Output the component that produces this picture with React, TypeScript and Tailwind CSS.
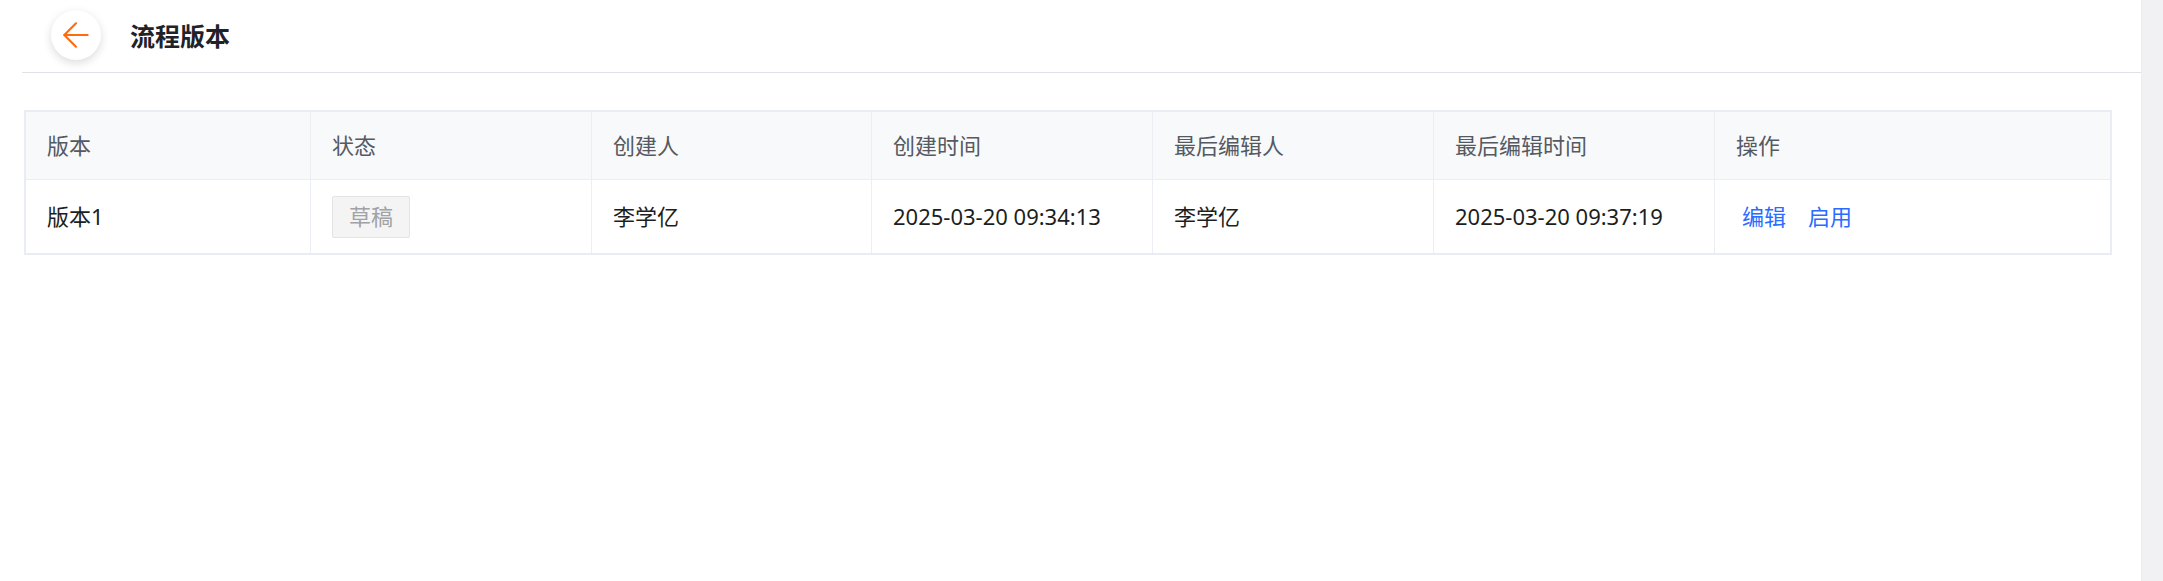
import React from "react";
import { ArrowLeft } from "lucide-react";

interface VersionRow {
  name: string;
  status: string;
  creator: string;
  createdAt: string;
  editor: string;
  editedAt: string;
}

const columns = ["版本", "状态", "创建人", "创建时间", "最后编辑人", "最后编辑时间", "操作"];

const rows: VersionRow[] = [
  {
    name: "版本1",
    status: "草稿",
    creator: "李学亿",
    createdAt: "2025-03-20 09:34:13",
    editor: "李学亿",
    editedAt: "2025-03-20 09:37:19",
  },
];

const font = { fontFamily: '"Noto Sans", "Noto Sans CJK SC", sans-serif' };

const App: React.FC = () => {
  return (
    <div className="flex h-[581px] w-full bg-white" style={font}>
      <div className="flex-1 flex flex-col">
        {/* header */}
        <div className="ml-[22px] h-[73px] border-b border-[#dfe1e6] flex items-center">
          <button className="ml-[29px] w-[50px] h-[50px] rounded-full bg-white shadow-[0_3px_10px_rgba(0,0,0,0.14)] flex items-center justify-center -mt-[2px]">
            <ArrowLeft className="text-[#ff6a0d]" size={40} strokeWidth={1.25} />
          </button>
          <h1 className="ml-[29px] text-[25px] font-bold text-[#1f2329] leading-none">流程版本</h1>
        </div>

        {/* table */}
        <div className="mt-[37px] ml-[24px] mr-[29px] border-2 border-[#e9ecf2]">
          <div className="grid grid-cols-[285px_281px_280px_281px_281px_281px_1fr] h-[68px] bg-[#f8f9fb] border-b border-[#eceef3]">
            {columns.map((c, i) => (
              <div
                key={c}
                className={`flex items-center pl-[21px] text-[22px] text-[#555a62] ${
                  i < columns.length - 1 ? "border-r border-[#eceef3]" : ""
                }`}
              >
                {c}
              </div>
            ))}
          </div>
          {rows.map((r) => (
            <div
              key={r.name}
              className="grid grid-cols-[285px_281px_280px_281px_281px_281px_1fr] h-[73px] text-[22px] text-[#1c1e21]"
            >
              <div className="flex items-center pl-[21px] border-r border-[#eceef3]">{r.name}</div>
              <div className="flex items-center pl-[21px] border-r border-[#eceef3]">
                <span className="h-[42px] px-[16px] flex items-center bg-[#f4f4f5] border border-[#e3e4e6] rounded-[2px] text-[#a0a2a6]">
                  {r.status}
                </span>
              </div>
              <div className="flex items-center pl-[21px] border-r border-[#eceef3]">{r.creator}</div>
              <div className="flex items-center pl-[21px] border-r border-[#eceef3]">{r.createdAt}</div>
              <div className="flex items-center pl-[21px] border-r border-[#eceef3]">{r.editor}</div>
              <div className="flex items-center pl-[21px] border-r border-[#eceef3]">{r.editedAt}</div>
              <div className="flex items-center pl-[27px] gap-[22px] text-[#2a6cff]">
                <span>编辑</span>
                <span>启用</span>
              </div>
            </div>
          ))}
        </div>
      </div>
      <div className="w-[22px] h-full bg-[#f1f1f3] border-l border-[#ececef]" />
    </div>
  );
};

export default App;
